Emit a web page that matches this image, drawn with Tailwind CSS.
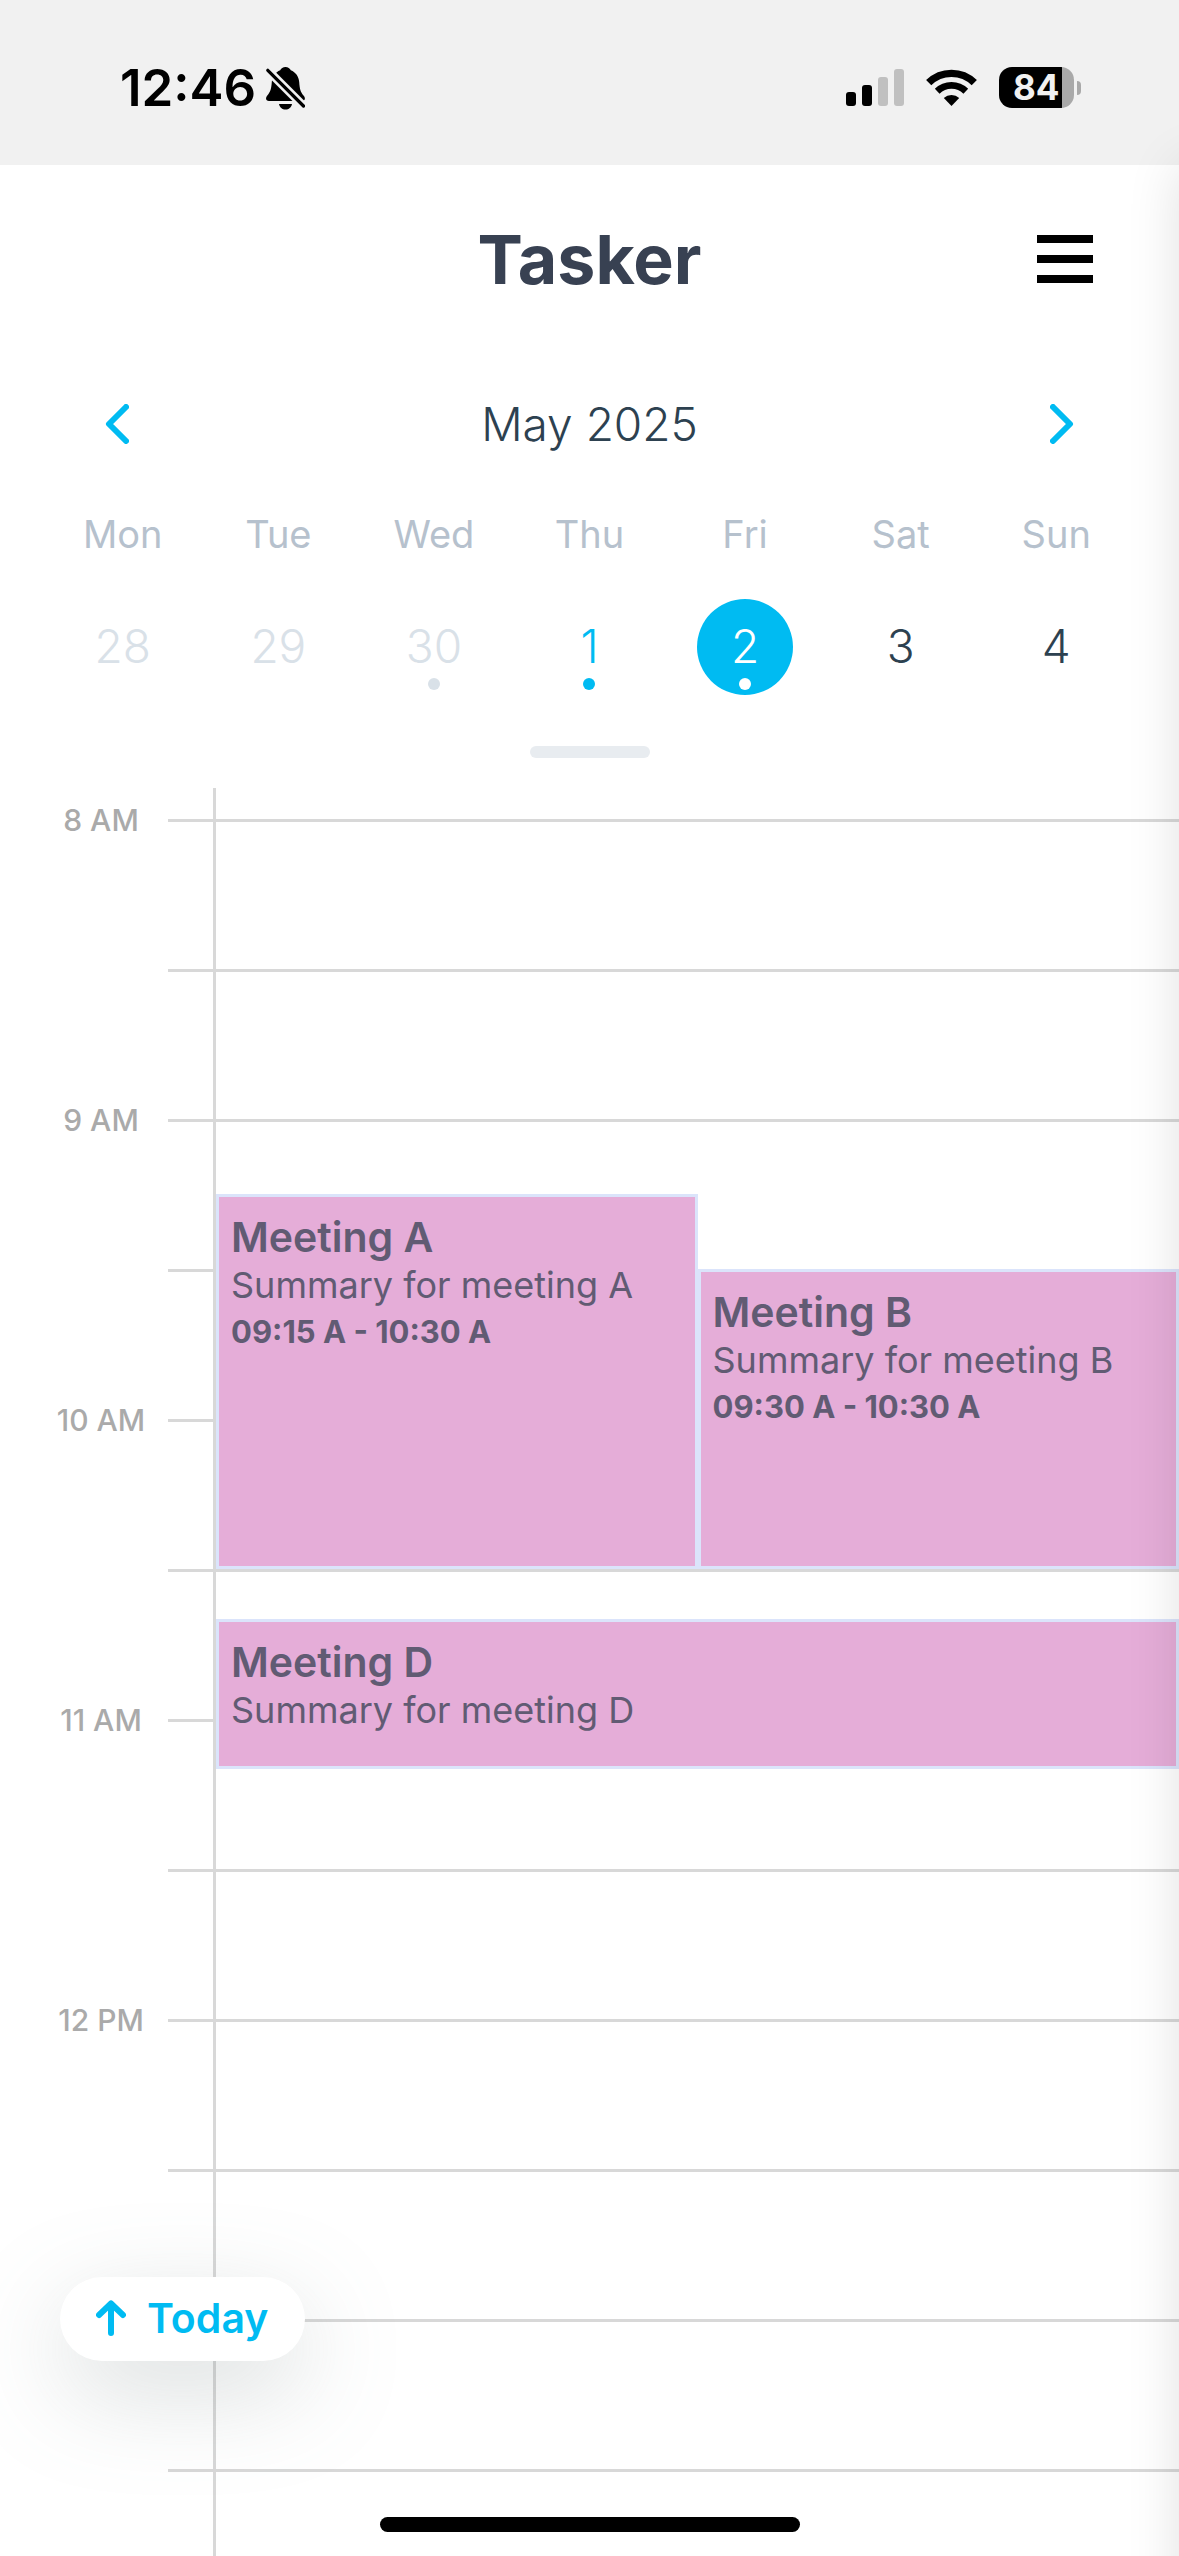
<!DOCTYPE html>
<html lang="en">
<head>
<meta charset="utf-8">
<meta name="viewport" content="width=device-width, initial-scale=1">
<title>Tasker</title>
<script src="https://cdn.jsdelivr.net/npm/@tailwindcss/browser@4"></script>
</head>
<body class="bg-white font-['Inter','Liberation_Sans',sans-serif]">
<div class="relative flex min-h-screen flex-col overflow-hidden">

  <!-- Status bar -->
  <div class="flex h-[165px] items-start justify-between bg-[#f1f1f1] pt-[64px] pr-[98px] pl-[120px]">
    <div class="flex items-center gap-[10px]">
      <span class="text-[51px] leading-[48px] font-semibold text-black">12:46</span>
      <svg class="h-[43px] w-[39px]" viewBox="0 0 39 43" aria-label="Silent mode">
        <path fill="#000" d="M19.500 0c2.500 0 4.500 1.300 5.300 3.200 5 2 8 6.200 8.400 11.800.4 6.500 1.300 10 4.300 13.500 2.400 2.800 1.500 5.500-1.500 5.500H3c-3 0-4-2.800-1.700-5.500C4.300 25 5.400 21.500 5.800 15c.4-5.600 3.400-9.800 8.400-11.800C15 1.300 17 0 19.500 0z"/>
        <path fill="#000" d="M13 37h13c-.6 3.400-3.200 5.600-6.500 5.600S13.600 40.400 13 37z"/>
        <path stroke="#f1f1f1" stroke-width="8.500" d="M-1 .5l41 41"/>
        <path stroke="#000" stroke-width="3.200" stroke-linecap="round" d="M1.800 3.300l35.700 35.700"/>
      </svg>
    </div>
    <div class="flex items-center pt-[3px]">
      <svg class="mr-[22px] h-[37px] w-[58px]" viewBox="0 0 58 37" aria-label="Signal">
        <rect x="0" y="23" width="10" height="14" rx="3"/>
        <rect x="16" y="16" width="10" height="21" rx="3"/>
        <rect x="32" y="8" width="10" height="29" rx="3" fill="#c0c0c0"/>
        <rect x="48" y="0" width="10" height="37" rx="3" fill="#c0c0c0"/>
      </svg>
      <svg class="mr-[22px] h-[37px] w-[51px]" viewBox="0 0 51 37" fill="none" aria-label="Wi-Fi">
        <path stroke="#000" stroke-width="7.400" d="M2.700 13.700a32.500 32.500 0 0 1 45.600 0"/>
        <path stroke="#000" stroke-width="6.800" d="M11.200 22.200a20.500 20.500 0 0 1 28.600 0"/>
        <path fill="#000" d="M25.500 37l-7.700-8a11.300 11.300 0 0 1 15.400 0z"/>
      </svg>
      <div class="flex h-[41px] w-[75px] items-center overflow-hidden rounded-[13px] bg-[linear-gradient(to_right,#000_84%,#a9a9a9_84%)] pl-[14px]">
        <span class="text-[35px] leading-[41px] font-bold text-[#f1f1f1]">84</span>
      </div>
      <div class="ml-[3px] h-[14px] w-[4px] rounded-r-full bg-[#a9a9a9]"></div>
    </div>
  </div>

  <!-- App header -->
  <header class="grid h-[188px] grid-cols-[1fr_auto_1fr] items-center px-[86px]">
    <h1 class="col-start-2 text-[68px] leading-[84px] font-bold text-[#384152]">Tasker</h1>
    <button class="flex w-[56px] flex-col gap-[12px] justify-self-end" aria-label="Menu">
      <span class="h-2 bg-black"></span>
      <span class="h-2 bg-black"></span>
      <span class="h-2 bg-black"></span>
    </button>
  </header>

  <!-- Week calendar -->
  <section class="px-[45px]" aria-label="Calendar">
    <div class="flex h-[142px] items-center justify-between px-[60px]">
      <button aria-label="Previous"><svg class="h-[40px] w-[24px]" viewBox="0 0 24 40" fill="none" stroke="#00bbf2" stroke-width="6" stroke-linecap="round" stroke-linejoin="round"><path d="M21 3L4 20l17 17"/></svg></button>
      <h2 class="text-[46px] leading-[58px] font-light text-[#2d4150]">May 2025</h2>
      <button aria-label="Next"><svg class="h-[40px] w-[24px]" viewBox="0 0 24 40" fill="none" stroke="#00bbf2" stroke-width="6" stroke-linecap="round" stroke-linejoin="round"><path d="M3 3l17 17L3 37"/></svg></button>
    </div>
    <div class="grid grid-cols-7 pt-[15px] text-center text-[38px] leading-[48px] text-[#b6c1cd]">
      <span>Mon</span><span>Tue</span><span>Wed</span><span>Thu</span><span>Fri</span><span>Sat</span><span>Sun</span>
    </div>
    <div class="grid grid-cols-7 justify-items-center pt-[41px] text-[46px] leading-[58px] font-light text-[#2d4150]">
      <button class="flex size-[96px] flex-col items-center pt-[18px] text-[#d9e1e8]">28</button>
      <button class="flex size-[96px] flex-col items-center pt-[18px] text-[#d9e1e8]">29</button>
      <button class="flex size-[96px] flex-col items-center gap-[3px] pt-[18px] text-[#d9e1e8]">30<span class="size-3 rounded-full bg-[#d9e1e8]"></span></button>
      <button class="flex size-[96px] flex-col items-center gap-[3px] pt-[18px] text-[#00bbf2]">1<span class="size-3 rounded-full bg-[#00bbf2]"></span></button>
      <button class="flex size-[96px] flex-col items-center gap-[3px] rounded-full bg-[#00bbf2] pt-[18px] text-white" aria-current="date">2<span class="size-3 rounded-full bg-white"></span></button>
      <button class="flex size-[96px] flex-col items-center pt-[18px]">3</button>
      <button class="flex size-[96px] flex-col items-center pt-[18px]">4</button>
    </div>
    <div class="mx-auto mt-[51px] h-3 w-[120px] rounded-full bg-[#e8ecf0]"></div>
  </section>

  <!-- Day timeline -->
  <main class="relative mt-[30px] flex grow flex-col pt-[31px] text-[30px] leading-[36px] font-medium text-[#aaa]">
    <div class="flex h-[150px]"><span class="-mt-[17px] w-[168px] pl-[34px] text-center">8 AM</span><div class="grow border-t-3 border-[#d8d8d8]"></div></div>
    <div class="ml-[168px] h-[150px] border-t-3 border-[#d8d8d8]"></div>
    <div class="flex h-[150px]"><span class="-mt-[17px] w-[168px] pl-[34px] text-center">9 AM</span><div class="grow border-t-3 border-[#d8d8d8]"></div></div>
    <div class="ml-[168px] h-[150px] border-t-3 border-[#d8d8d8]"></div>
    <div class="flex h-[150px]"><span class="-mt-[17px] w-[168px] pl-[34px] text-center">10 AM</span><div class="grow border-t-3 border-[#d8d8d8]"></div></div>
    <div class="ml-[168px] h-[150px] border-t-3 border-[#d8d8d8]"></div>
    <div class="flex h-[150px]"><span class="-mt-[17px] w-[168px] pl-[34px] text-center">11 AM</span><div class="grow border-t-3 border-[#d8d8d8]"></div></div>
    <div class="ml-[168px] h-[150px] border-t-3 border-[#d8d8d8]"></div>
    <div class="flex h-[150px]"><span class="-mt-[17px] w-[168px] pl-[34px] text-center">12 PM</span><div class="grow border-t-3 border-[#d8d8d8]"></div></div>
    <div class="ml-[168px] h-[150px] border-t-3 border-[#d8d8d8]"></div>
    <div class="ml-[168px] h-[150px] border-t-3 border-[#d8d8d8]"></div>
    <div class="ml-[168px] grow border-t-3 border-[#d8d8d8]"></div>

    <!-- Events: each grid row is five minutes -->
    <div class="absolute inset-y-0 right-0 left-[213px] grid auto-rows-[25px] grid-cols-2 border-l-3 border-[#d8d8d8] pt-[31px] text-[#615b73]">
      <article class="col-start-1 row-start-16 row-end-31 border-3 border-[#dbe4fb] bg-[#e5add8] px-3 pt-[15px]">
        <h3 class="text-[41px] leading-[50px] font-semibold">Meeting A</h3>
        <p class="text-[36px] leading-[46px] font-normal">Summary for meeting A</p>
        <p class="text-[31px] leading-[48px] font-bold">09:15 A - 10:30 A</p>
      </article>
      <article class="col-start-2 row-start-19 row-end-31 border-3 border-[#dbe4fb] bg-[#e5add8] px-3 pt-[15px]">
        <h3 class="text-[41px] leading-[50px] font-semibold">Meeting B</h3>
        <p class="text-[36px] leading-[46px] font-normal">Summary for meeting B</p>
        <p class="text-[31px] leading-[48px] font-bold">09:30 A - 10:30 A</p>
      </article>
      <article class="col-span-2 col-start-1 row-start-33 row-end-39 border-3 border-[#dbe4fb] bg-[#e5add8] px-3 pt-[15px]">
        <h3 class="text-[41px] leading-[50px] font-semibold">Meeting D</h3>
        <p class="text-[36px] leading-[46px] font-normal">Summary for meeting D</p>
      </article>
    </div>
  </main>

  <!-- Floating button -->
  <button class="absolute bottom-[195px] left-[60px] flex h-[84px] items-center gap-[21px] rounded-full bg-white pr-[37px] pb-[2px] pl-[36px] text-[41px] leading-[50px] font-semibold text-[#00bbf2] shadow-[0_30px_100px_rgba(110,122,125,0.26)]">
    <svg class="h-[36px] w-[30px]" viewBox="0 0 30 36" fill="none" stroke="#00bbf2" stroke-width="6" stroke-linecap="round" stroke-linejoin="round"><path d="M15 4v29M3 15L15 3.500 27 15"/></svg>
    Today
  </button>

  <!-- Home indicator -->
  <div class="absolute bottom-[24px] left-1/2 h-[15px] w-[420px] -translate-x-1/2 rounded-full bg-black"></div>

  <!-- Closed side drawer, its shadow falls on the page edge -->
  <aside class="absolute top-[165px] -right-[300px] -bottom-[100px] w-[300px] bg-white shadow-[0_0_50px_rgba(0,0,0,0.12)]"></aside>
</div>
</body>
</html>
